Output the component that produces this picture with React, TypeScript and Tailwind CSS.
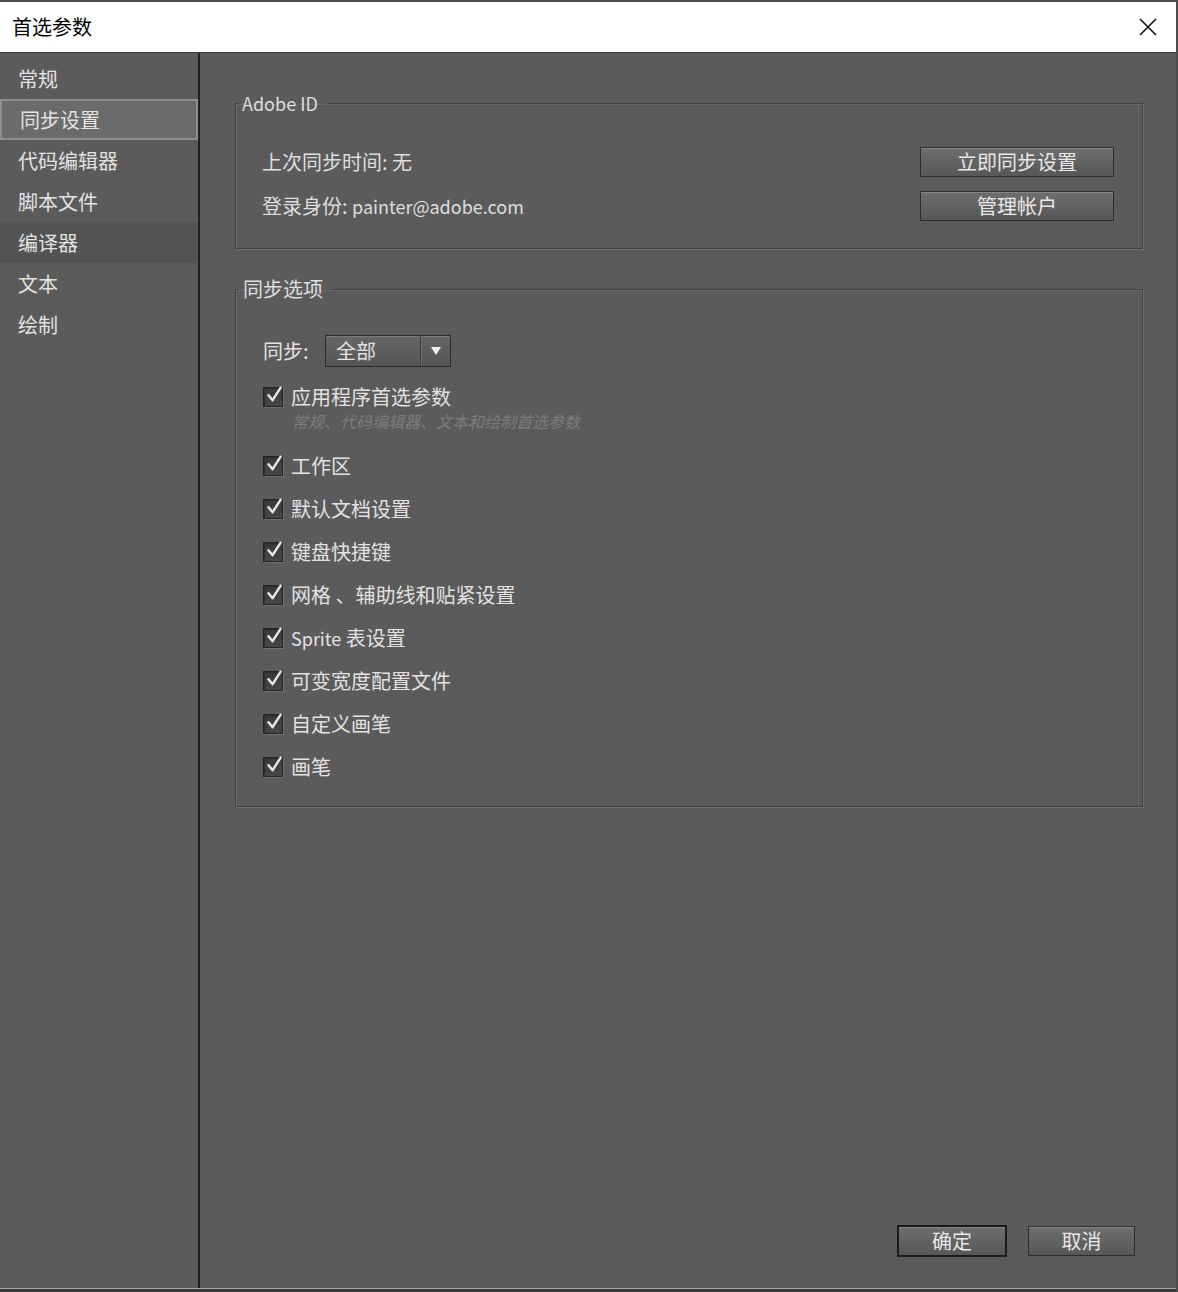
const font = "font-['Noto_Sans_CJK_SC','Liberation_Sans',sans-serif]"

const sidebarItems = ['常规', '同步设置', '代码编辑器', '脚本文件', '编译器', '文本', '绘制']

const syncOptions = [
  '工作区',
  '默认文档设置',
  '键盘快捷键',
  '网格 、辅助线和贴紧设置',
  'Sprite 表设置',
  '可变宽度配置文件',
  '自定义画笔',
  '画笔',
]

const CheckBox = () => (
  <span className="relative block h-[20px] w-[20px] shrink-0 border border-[#242424] bg-gradient-to-b from-[#383838] to-[#474747] shadow-[1px_1px_0_#707070,inset_1px_1px_0_#2e2e2e]">
    <svg viewBox="0 0 20 20" className="absolute -top-[3px] left-[1px] h-[19px] w-[19px]">
      <path d="M3 10 L8 16 L17 2" fill="none" stroke="#e6e6e6" strokeWidth="2.6" strokeLinejoin="round" />
    </svg>
  </span>
)

const Label = ({ text }: { text: string }) => {
  if (text.startsWith('Sprite')) {
    return (
      <span>
        <span className="text-[18px]">Sprite</span> 表设置
      </span>
    )
  }
  return <span>{text}</span>
}

const Button = ({ children, className = '' }: any) => (
  <button
    className={`flex items-center justify-center bg-gradient-to-b from-[#6e6e6e] to-[#575757] text-[20px] leading-none text-[#e8e8e8] shadow-[inset_0_1px_0_#858585] ${className}`}
  >
    {children}
  </button>
)

export default function App() {
  return (
    <div className={`${font} flex h-[1292px] w-[1178px] flex-col overflow-hidden bg-[#5b5b5b] border-t-2 border-r-2 border-[#4c4c4c]`}>
      <div className="flex h-[51px] shrink-0 items-center justify-between border-b border-[#3a3a3a] bg-white pl-[12px] pr-[18px]">
        <span className="text-[20px] text-black">首选参数</span>
        <svg viewBox="0 0 20 20" className="h-[20px] w-[20px]">
          <path d="M2 2 L18 18 M18 2 L2 18" stroke="#111" strokeWidth="1.6" />
        </svg>
      </div>

      <div className="flex min-h-0 flex-1">
        <aside className="w-[198px] shrink-0 pt-[5px]">
          {sidebarItems.map((item) => (
            <div
              key={item}
              className={`flex h-[41px] items-center pl-[18px] text-[20px] text-[#e2e2e2] ${
                item === '同步设置'
                  ? 'border-2 border-[#8e8e8e] bg-[#6b6b6b] pl-[16px]'
                  : item === '编译器'
                    ? 'bg-[#535353]'
                    : ''
              }`}
            >
              {item}
            </div>
          ))}
        </aside>
        <div className="w-[2px] shrink-0 bg-[#1f1f1f]" />

        <main className="flex flex-1 flex-col pl-[35px] pr-[33px] pt-[40px] pb-[31px]">
          <fieldset className="border border-[#424242] shadow-[1px_1px_0_#6e6e6e,inset_1px_1px_0_#6a6a6a]">
            <legend className="ml-[3px] pl-[3px] pr-[10px] text-[18px] leading-[20px] text-[#dedede]">Adobe ID</legend>
            <div className="pl-[26px] pr-[28px] pt-[27px] pb-[20px] text-[20px] text-[#dedede]">
              <div className="flex h-[44px] items-center justify-between">
                <span>上次同步时间: 无</span>
                <Button className="h-[30px] w-[194px] border border-[#2c2c2c]">立即同步设置</Button>
              </div>
              <div className="flex h-[44px] items-center justify-between">
                <span>
                  登录身份: <span className="text-[18px]">painter@adobe.com</span>
                </span>
                <Button className="h-[30px] w-[194px] border border-[#2c2c2c]">管理帐户</Button>
              </div>
            </div>
          </fieldset>

          <fieldset className="mt-[30px] border border-[#424242] shadow-[1px_1px_0_#6e6e6e,inset_1px_1px_0_#6a6a6a]">
            <legend className="ml-[3px] pl-[4px] pr-[9px] text-[20px] leading-[20px] text-[#dedede]">同步选项</legend>
            <div className="pl-[27px] pt-[36px] pb-[27px] text-[20px] leading-[24px] text-[#e2e2e2]">
              <div className="flex h-[32px] items-center">
                <span className="w-[62px]">同步:</span>
                <div className="flex h-[32px] w-[126px] border border-[#2a2a2a] bg-gradient-to-b from-[#666] to-[#555] shadow-[inset_0_1px_0_#7a7a7a]">
                  <span className="flex flex-1 items-center border-r border-[#3e3e3e] pl-[10px] leading-none">全部</span>
                  <span className="flex w-[29px] items-center justify-center border-l border-[#6c6c6c]">
                    <svg viewBox="0 0 10 8" className="h-[8px] w-[10px]">
                      <path d="M0 0 H10 L5 8 Z" fill="#f2f2f2" />
                    </svg>
                  </span>
                </div>
              </div>

              <div className="mt-[18px] flex h-[24px] items-center gap-[8px]">
                <CheckBox />
                <span>应用程序首选参数</span>
              </div>
              <div className="mt-[3px] flex h-[18px] items-center pl-[29px] text-[16px] italic leading-[18px] text-[#7c7c7c]">
                常规、代码编辑器、文本和绘制首选参数
              </div>

              <div className="mt-[24px] flex flex-col gap-[19px]">
                {syncOptions.map((opt) => (
                  <div key={opt} className="flex h-[24px] items-center gap-[8px]">
                    <CheckBox />
                    <Label text={opt} />
                  </div>
                ))}
              </div>
            </div>
          </fieldset>

          <div className="mt-auto flex justify-end gap-[21px] pr-[8px]">
            <Button className="h-[32px] w-[110px] border-2 border-[#1c1c1c]">确定</Button>
            <Button className="mt-px h-[30px] w-[107px] border border-[#2c2c2c]">取消</Button>
          </div>
        </main>
      </div>

      <div className="h-px shrink-0 bg-[#a2a2a2]" />
      <div className="h-[3px] shrink-0 bg-[#3a3a3a]" />
    </div>
  )
}
